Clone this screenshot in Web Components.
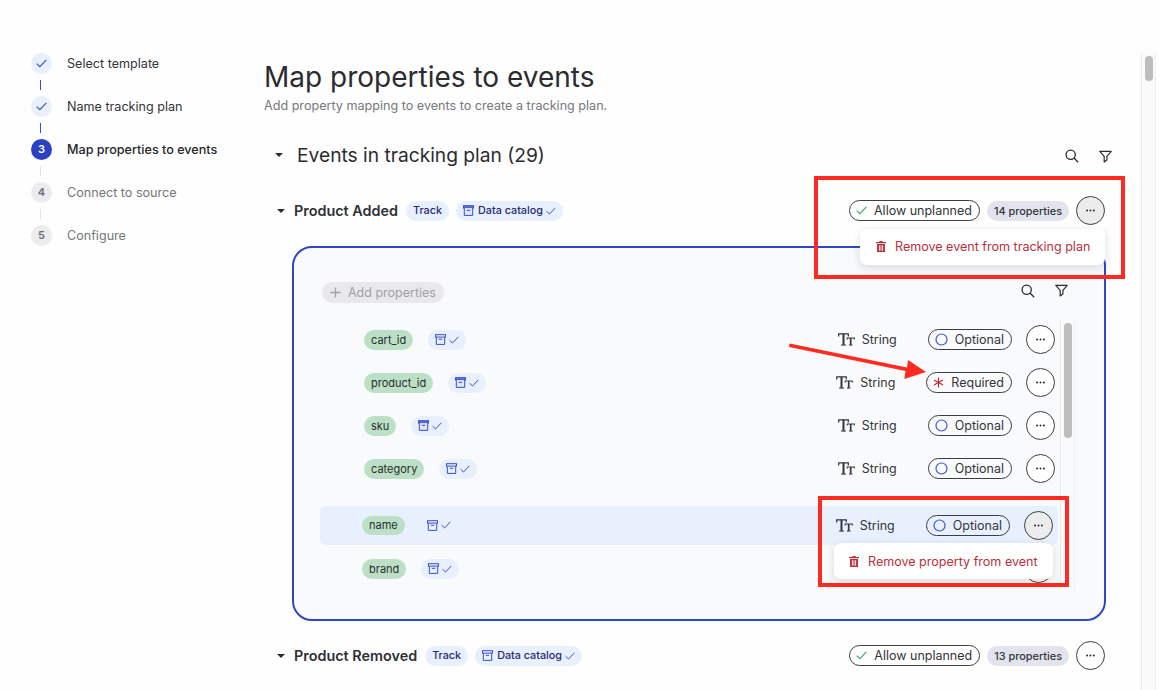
<!DOCTYPE html>
<html lang="en">
<head>
<meta charset="utf-8">
<title>Map properties to events</title>
<style>
    html, body { margin: 0; height: 100%; }
    body {
        background: #fefefe;
        color: #2b2c30;
        font-family: Inter, "Liberation Sans", sans-serif;
        overflow: hidden;
    }
</style>
</head>
<body>
<tracking-page>
    <step-list slot="aside"></step-list>

    <page-heading title="Map properties to events" subtitle="Add property mapping to events to create a tracking plan."></page-heading>
    <section-header title="Events in tracking plan (29)"></section-header>

    <event-row name="Product Added" count="14 properties" menu="Remove event from tracking plan" active></event-row>
    <property-panel>
        <property-row name="cart_id"></property-row>
        <property-row name="product_id" required filled></property-row>
        <property-row name="sku" filled></property-row>
        <property-row name="category"></property-row>
        <property-row name="name" selected menu="Remove property from event"></property-row>
        <property-row name="brand" covered></property-row>
    </property-panel>
    <event-row name="Product Removed" count="13 properties" spaced></event-row>

    <red-marks slot="overlay"></red-marks>
</tracking-page>

<script>
const icons = {
    check: (size = 10, color = "currentColor") => `
        <svg width="${size}" height="${size * 0.8}" viewBox="0 0 10 8" fill="none">
            <path d="M0.6 4.2 L3.5 7 L9.4 0.8" stroke="${color}" stroke-width="1"/>
        </svg>`,
    archive: (filled) => `
        <svg width="11" height="11" viewBox="0 0 11 11" fill="none" stroke="#3a4fc9" stroke-width="1">
            <rect x="0.5" y="0.7" width="10" height="2.4" fill="${filled ? "#5f72d8" : "none"}"/>
            <path d="M1.3 3.1 V10.4 H9.7 V3.1" fill="${filled ? "#dfe5f9" : "none"}"/>
            <path d="M3.8 5.3 H7.2"/>
        </svg>`,
    more: () => `
        <svg width="9" height="3" viewBox="0 0 9 3" fill="#2b2c30">
            <circle cx="1.1" cy="1.5" r="1"/><circle cx="4.5" cy="1.5" r="1"/><circle cx="7.9" cy="1.5" r="1"/>
        </svg>`,
    search: () => `
        <svg width="14" height="14" viewBox="0 0 14 14" fill="none" stroke="#2b2c30" stroke-width="1.3">
            <circle cx="5.7" cy="5.7" r="4.6"/><path d="M9 9 L13.2 13.2"/>
        </svg>`,
    filter: () => `
        <svg width="13" height="13" viewBox="0 0 13 13" fill="none" stroke="#2b2c30" stroke-width="1.2" stroke-linejoin="round">
            <path d="M0.8 1.3 H12.2 L7.9 6.4 V9.9 L5.2 11.9 V6.4 Z"/>
        </svg>`,
    caret: () => `
        <svg width="8" height="4" viewBox="0 0 8 4" fill="#2b2c30"><path d="M0 0 H8 L4 4 Z"/></svg>`,
    trash: () => `
        <svg width="10" height="11" viewBox="0 0 10 11" fill="#b8303c">
            <path d="M3.4 0 H6.6 V1 H10 V2.3 H0 V1 H3.4 Z"/>
            <path d="M1 3 H9 V11 H1 Z M2.9 4.3 V9.7 H3.8 V4.3 Z M4.6 4.3 V9.7 H5.4 V4.3 Z M6.2 4.3 V9.7 H7.1 V4.3 Z" fill-rule="evenodd"/>
        </svg>`,
    type: () => `
        <svg width="17" height="13" viewBox="0 0 17 13" fill="none" stroke="#34353a">
            <path d="M0.7 3.4 V0.8 H10.3 V3.4" stroke-width="1.2"/>
            <path d="M5.5 0.8 V11.8" stroke-width="2"/>
            <path d="M3.2 12 H7.8" stroke-width="1.2"/>
            <path d="M9.2 6.6 V5 H16.3 V6.6" stroke-width="1.1"/>
            <path d="M12.7 5 V11.8" stroke-width="1.7"/>
            <path d="M11 12 H14.5" stroke-width="1.1"/>
        </svg>`,
    ring: () => `
        <svg width="13" height="13" viewBox="0 0 13 13" fill="none" stroke="#3f55d4" stroke-width="1.2">
            <circle cx="6.5" cy="6.5" r="5.5"/>
        </svg>`,
    star: () => `
        <svg width="11" height="11" viewBox="0 0 11 11" fill="none" stroke="#c8232f" stroke-width="1.1">
            <path d="M5.5 0.5 V10.5 M1 2.9 L10 8.1 M10 2.9 L1 8.1"/>
        </svg>`,
};

class TrackingPage extends HTMLElement {
    constructor() {
        super();
        this.attachShadow({ mode: "open" });
    }

    connectedCallback() {
        this.shadowRoot.innerHTML = `
            <style>
                :host { display: flex; position: relative; width: 1159px; height: 690px; overflow: hidden; }
                aside { width: 264px; flex: none; padding: 53px 0 0 31px; box-sizing: border-box; }
                main { width: 841px; flex: none; padding-top: 62px; }
                .page-bar { display: flex; width: 15px; margin: 53px 0 0 36px; height: 637px; flex: none;
                    box-sizing: border-box; background: #fafafa; border-left: 1px solid #e9e9eb; border-right: 1px solid #efeff0; justify-content: center; }
                .page-bar i { display: block; width: 8px; height: 25px; margin-top: 3px; border-radius: 4px; background: #bdbdbd; }
            </style>
            <aside><slot name="aside"></slot></aside>
            <main><slot></slot></main>
            <div class="page-bar"><i></i></div>
            <slot name="overlay"></slot>
        `;
    }
}

class StepList extends HTMLElement {
    constructor() {
        super();
        this.attachShadow({ mode: "open" });
    }

    connectedCallback() {
        const steps = [
            { label: "Select template", state: "done" },
            { label: "Name tracking plan", state: "done" },
            { label: "Map properties to events", state: "current" },
            { label: "Connect to source", state: "todo" },
            { label: "Configure", state: "todo" },
        ];
        this.shadowRoot.innerHTML = `
            <style>
                :host { display: block; }
                .step { display: flex; align-items: center; gap: 15px; height: 21px; font-size: 12.6px; line-height: 21px; }
                .dot { width: 21px; height: 21px; border-radius: 50%; flex: none; display: flex; align-items: center; justify-content: center; font-size: 11px; font-weight: 600; }
                .done .dot { background: #e8effd; color: #3c50c8; }
                .current .dot { background: #2a41c4; color: #fff; }
                .current { font-weight: 500; color: #26272b; }
                .todo .dot { background: #ececee; color: #6d6e73; }
                .todo { color: #76777c; }
                .done { color: #34353a; }
                .line { width: 1px; height: 10px; margin: 6px 0 6px 9px; background: #e3e3e6; }
                .line.on { background: #3350d8; }
            </style>
            ${steps
                .map(
                    (step, i) => `
                ${i ? `<div class="line ${steps[i].state !== "todo" ? "on" : ""}"></div>` : ""}
                <div class="step ${step.state}">
                    <span class="dot">${step.state === "done" ? icons.check(11) : i + 1}</span>
                    <span>${step.label}</span>
                </div>
            `
                )
                .join("")}
        `;
    }
}

class PageHeading extends HTMLElement {
    constructor() {
        super();
        this.attachShadow({ mode: "open" });
    }

    connectedCallback() {
        this.shadowRoot.innerHTML = `
            <style>
                :host { display: block; }
                h1 { margin: 0; font-size: 28px; line-height: 30px; font-weight: 400; color: #2b2c30; }
                p { margin: 6px 0 0; font-size: 12.6px; line-height: 16px; color: #77787d; }
            </style>
            <h1>${this.getAttribute("title")}</h1>
            <p>${this.getAttribute("subtitle")}</p>
        `;
    }
}

class SectionHeader extends HTMLElement {
    constructor() {
        super();
        this.attachShadow({ mode: "open" });
    }

    connectedCallback() {
        this.shadowRoot.innerHTML = `
            <style>
                :host { display: flex; align-items: center; height: 30px; margin-top: 26px; margin-right: -7px; padding-left: 11px; }
                h2 { margin: 0 0 0 14px; font-size: 19.2px; font-weight: 400; flex: 1; color: #2b2c30; }
                .tools { display: flex; align-items: center; gap: 20px; margin-top: 2px; }
                .tools span { display: flex; }
            </style>
            ${icons.caret()}
            <h2>${this.getAttribute("title")}</h2>
            <div class="tools"><span>${icons.search()}</span><span>${icons.filter()}</span></div>
        `;
    }
}

class EventRow extends HTMLElement {
    constructor() {
        super();
        this.attachShadow({ mode: "open" });
    }

    connectedCallback() {
        const menu = this.getAttribute("menu");
        this.shadowRoot.innerHTML = `
            <style>
                :host { display: flex; align-items: center; position: relative; z-index: 2; height: 29px; margin-top: 26px; padding-left: 13px; gap: 7px; }
                :host([spaced]) { margin-top: 20px; }
                strong { margin-left: 2px; margin-right: 1px; font-size: 14.4px; font-weight: 600; color: #2f3035; }
                .tag { display: inline-flex; align-items: center; height: 20px; padding: 0 7px; border-radius: 10px; background: #e8effd; color: #1f2a72; font-size: 10.8px; font-weight: 500; gap: 3px; white-space: nowrap; }
                .tag svg:first-child { margin-right: 1px; }
                .end { margin-left: auto; display: flex; align-items: center; gap: 7px; }
                .allow { display: flex; align-items: center; height: 21px; box-sizing: border-box; padding: 0 7px 0 6px; gap: 7px; border: 1px solid #3c3d42; border-radius: 11px; font-size: 12.5px; color: #34353a; }
                .count { display: flex; align-items: center; height: 20px; padding: 0 7px; border-radius: 10px; background: #e1e4ec; font-size: 10.9px; font-weight: 500; color: #34353a; }
                .more { width: 29px; height: 29px; box-sizing: border-box; border: 1px solid #3c3d42; border-radius: 50%; display: flex; align-items: center; justify-content: center; }
                :host([active]) .more { background: #ececec; }
                .menu { position: absolute; top: 33px; right: 0; width: 245px; height: 36px; box-sizing: border-box; padding: 0 0 1px 16px; display: flex; align-items: center; gap: 9px; background: #fff; border-radius: 7px; box-shadow: 0 3px 10px rgba(20, 20, 40, 0.14); color: #b8303c; font-size: 12.55px; white-space: nowrap; }
            </style>
            ${icons.caret()}
            <strong>${this.getAttribute("name")}</strong>
            <span class="tag">Track</span>
            <span class="tag">${icons.archive(this.hasAttribute("active"))}Data catalog ${icons.check(10, "#3c50c8")}</span>
            <div class="end">
                <span class="allow">${icons.check(11, "#3aa76d")}Allow unplanned</span>
                <span class="count">${this.getAttribute("count")}</span>
                <span class="more">${icons.more()}</span>
            </div>
            ${menu ? `<div class="menu">${icons.trash()}${menu}</div>` : ""}
        `;
    }
}

class PropertyPanel extends HTMLElement {
    constructor() {
        super();
        this.attachShadow({ mode: "open" });
    }

    connectedCallback() {
        this.shadowRoot.innerHTML = `
            <style>
                :host { display: block; box-sizing: border-box; width: 814px; height: 375px; margin: 21px 0 0 28px; padding: 34px 0 0 26px; border: 2px solid #2f46c8; border-radius: 20px; background: #f9fafc; }
                .bar { display: flex; align-items: center; justify-content: space-between; width: 746px; height: 21px; margin-left: 2px; }
                .add { display: flex; align-items: center; height: 21px; padding: 0 8px; gap: 7px; border-radius: 11px; background: #e9e9eb; color: #a0a1a6; font-size: 12.5px; }
                .add svg { flex: none; }
                .tools { display: flex; align-items: center; gap: 20px; margin-bottom: 4px; }
                .tools span { display: flex; }
                .body { display: flex; margin-top: 17px; gap: 2px; align-items: flex-start; }
                .list { width: 738px; flex: none; padding-top: 5px; }
                .track { width: 15px; height: 270px; box-sizing: border-box; flex: none; display: flex; justify-content: center; border-left: 1px solid #e8e9ec; border-right: 1px solid #eeeff1; }
                .track i { display: block; width: 8px; height: 115px; margin-top: 3px; border-radius: 4px; background: #bdbdbd; }
            </style>
            <div class="bar">
                <span class="add">
                    <svg width="11" height="11" viewBox="0 0 11 11" stroke="#a0a1a6" stroke-width="1.3"><path d="M5.5 0.5 V10.5 M0.5 5.5 H10.5"/></svg>
                    Add properties
                </span>
                <div class="tools"><span>${icons.search()}</span><span>${icons.filter()}</span></div>
            </div>
            <div class="body">
                <div class="list"><slot></slot></div>
                <div class="track"><i></i></div>
            </div>
        `;
    }
}

class PropertyRow extends HTMLElement {
    constructor() {
        super();
        this.attachShadow({ mode: "open" });
    }

    connectedCallback() {
        const required = this.hasAttribute("required");
        const menu = this.getAttribute("menu");
        // brand row sits under the open menu, only the edge of its button shows
        const details = this.hasAttribute("covered")
            ? ""
            : `
                <span class="type">${icons.type()}String</span>
                <span class="pill">${required ? icons.star() : icons.ring()}${required ? "Required" : "Optional"}</span>
            `;
        this.shadowRoot.innerHTML = `
            <style>
                :host { display: flex; align-items: center; position: relative; height: 29px; margin-bottom: 14px; padding: 0 3px 0 44px; color: #34353a; font-size: 12.5px; }
                :host([selected]) { z-index: 2; height: 39px; margin: 23px 0 9px; padding: 0 5px 0 42px; background: #e8effd; border-radius: 6px; }
                :host([covered]) { padding: 0 5px 0 42px; }
                .name { display: flex; align-items: center; height: 20px; padding: 0 7px; border-radius: 10px; background: #bce0c6; font-size: 11px; font-weight: 400; color: #2b2c30; }
                :host([selected]) .name { height: 19px; margin-top: -1px; }
                .cat { display: flex; align-items: center; height: 20px; margin-left: 15px; padding: 0 7px; gap: 3px; border-radius: 10px; background: #e8effd; }
                :host([selected]) .cat { margin-top: -1px; }
                .end { margin-left: auto; display: flex; align-items: center; }
                .type { display: flex; align-items: center; gap: 7px; margin-right: 31px; }
                .pill { display: flex; align-items: center; height: 21px; box-sizing: border-box; padding: 0 7px 0 6px; gap: 7px; border: 1px solid #3c3d42; border-radius: 11px; margin-right: 14px; }
                .more { width: 29px; height: 29px; box-sizing: border-box; border: 1px solid #3c3d42; border-radius: 50%; display: flex; align-items: center; justify-content: center; background: #fff; }
                :host([selected]) .more { background: #ececec; }
                .menu { position: absolute; top: 37px; right: 5px; width: 219px; height: 36px; box-sizing: border-box; padding-left: 15px; display: flex; align-items: center; gap: 9px; background: #fff; border-radius: 7px; box-shadow: 0 3px 10px rgba(20, 20, 40, 0.14); color: #b8303c; font-size: 12.55px; white-space: nowrap; }
            </style>
            <span class="name">${this.getAttribute("name")}</span>
            <span class="cat">${icons.archive(this.hasAttribute("filled"))}${icons.check(10, "#3c50c8")}</span>
            <div class="end">
                ${details}
                <span class="more">${icons.more()}</span>
            </div>
            ${menu ? `<div class="menu">${icons.trash()}${menu}</div>` : ""}
        `;
    }
}

class RedMarks extends HTMLElement {
    constructor() {
        super();
        this.attachShadow({ mode: "open" });
    }

    connectedCallback() {
        this.shadowRoot.innerHTML = `
            <style>
                :host { display: block; position: absolute; inset: 0; z-index: 5; pointer-events: none; }
                .box { position: absolute; box-sizing: border-box; border: 4px solid #ff2a20; }
                svg { position: absolute; left: 0; top: 0; }
            </style>
            <div class="box" style="left:814px;top:176px;width:311px;height:103px"></div>
            <div class="box" style="left:818px;top:496px;width:251px;height:91px"></div>
            <svg width="1159" height="690" viewBox="0 0 1159 690">
                <path d="M789.6 343.4 L907 367.4 L908 360 L926 372 L904.3 379 L905.5 371 L789 347 Z" fill="#ff2a20"/>
            </svg>
        `;
    }
}

customElements.define("tracking-page", TrackingPage);
customElements.define("step-list", StepList);
customElements.define("page-heading", PageHeading);
customElements.define("section-header", SectionHeader);
customElements.define("event-row", EventRow);
customElements.define("property-panel", PropertyPanel);
customElements.define("property-row", PropertyRow);
customElements.define("red-marks", RedMarks);
</script>
</body>
</html>
